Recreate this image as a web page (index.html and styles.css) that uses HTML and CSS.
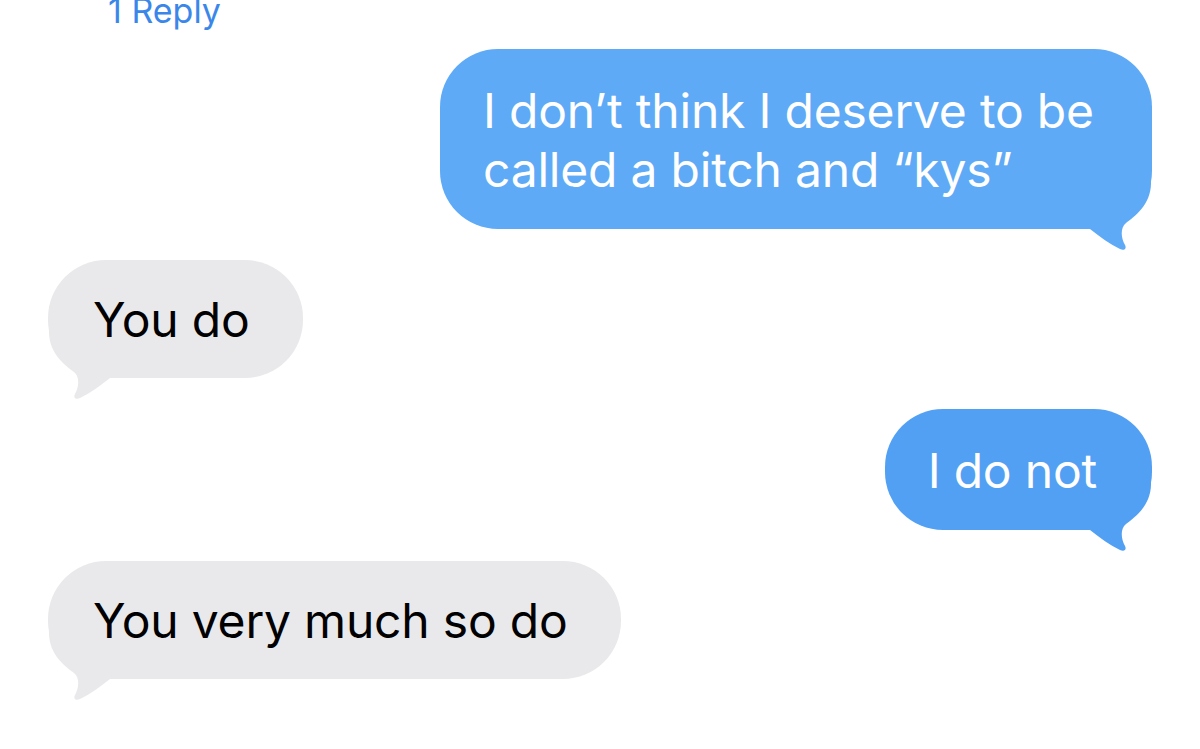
FILE: index.html
```html
<!DOCTYPE html>
<html lang="en">
<head>
<meta charset="utf-8">
<title>Messages</title>
<link rel="stylesheet" href="styles.css">
</head>
<body>
<main class="thread">
  <div class="reply-count">1 Reply</div>

  <div class="row row--out">
    <div class="bubble bubble--out">
      <p class="bubble__text">I don’t think I deserve to be called a bitch and “kys”</p>
      <svg class="tail" viewBox="-70 -60 70 82" aria-hidden="true"><path d="M-70,-60 L-1,-60 L-1,-46 C-1,-24 -18,-12 -26,-6 C-32,-1 -31,9 -27,16 C-25,20 -28,22 -32,20 C-42,15 -52,8 -62,0 L-70,0 Z"/></svg>
    </div>
  </div>

  <div class="row row--in">
    <div class="bubble bubble--in">
      <p class="bubble__text">You do</p>
      <svg class="tail" viewBox="-70 -60 70 82" aria-hidden="true"><path d="M-70,-60 L-1,-60 L-1,-46 C-1,-24 -18,-12 -26,-6 C-32,-1 -31,9 -27,16 C-25,20 -28,22 -32,20 C-42,15 -52,8 -62,0 L-70,0 Z"/></svg>
    </div>
  </div>

  <div class="row row--out">
    <div class="bubble bubble--out bubble--deep">
      <p class="bubble__text">I do not</p>
      <svg class="tail" viewBox="-70 -60 70 82" aria-hidden="true"><path d="M-70,-60 L-1,-60 L-1,-46 C-1,-24 -18,-12 -26,-6 C-32,-1 -31,9 -27,16 C-25,20 -28,22 -32,20 C-42,15 -52,8 -62,0 L-70,0 Z"/></svg>
    </div>
  </div>

  <div class="row row--in">
    <div class="bubble bubble--in">
      <p class="bubble__text">You very much so do</p>
      <svg class="tail" viewBox="-70 -60 70 82" aria-hidden="true"><path d="M-70,-60 L-1,-60 L-1,-46 C-1,-24 -18,-12 -26,-6 C-32,-1 -31,9 -27,16 C-25,20 -28,22 -32,20 C-42,15 -52,8 -62,0 L-70,0 Z"/></svg>
    </div>
  </div>
</main>
</body>
</html>
```

FILE: styles.css
```css
html, body {
  margin: 0;
  padding: 0;
  background: #ffffff;
}

body {
  width: 1200px;
  height: 749px;
  overflow: hidden;
  font-family: Inter, "Liberation Sans", Arial, sans-serif;
}

.thread {
  display: flex;
  flex-direction: column;
  gap: 31px;
  padding: 0 48px;
}

.reply-count {
  margin: -9px 0 -13px 60px;
  font-size: 34px;
  line-height: 40px;
  color: #3b87e9;
}

.row {
  display: flex;
}

.row--out {
  justify-content: flex-end;
}

.row--in {
  justify-content: flex-start;
}

.bubble {
  position: relative;
  max-width: 712px;
  box-sizing: border-box;
  border-radius: 58px;
  background: var(--bubble);
  color: var(--bubble-ink);
}

.bubble--out {
  --bubble: #5eaaf6;
  --bubble-ink: #ffffff;
  padding: 32px 55px 30px 43px;
}

.bubble--deep {
  --bubble: #52a0f3;
}

.bubble--in {
  --bubble: #e9e9eb;
  --bubble-ink: #000000;
  padding: 30px 53px 29px 45px;
}

.bubble__text {
  position: relative;
  z-index: 1;
  margin: 0;
  font-size: 48px;
  line-height: 59px;
  letter-spacing: -0.2px;
}

/* the little hook under the bubble's bottom corner */
.tail {
  position: absolute;
  bottom: -22px;
  width: 70px;
  height: 82px;
  fill: var(--bubble);
}

.bubble--out .tail {
  right: 0;
}

.bubble--in .tail {
  left: 0;
  transform: scaleX(-1);
}
```
